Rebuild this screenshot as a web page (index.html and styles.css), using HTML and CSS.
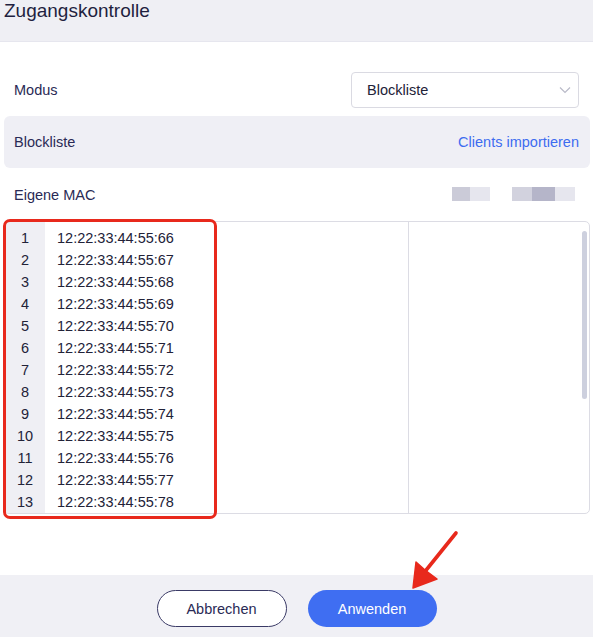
FILE: index.html
```html
<!DOCTYPE html>
<html lang="de">
<head>
<meta charset="utf-8">
<title>Zugangskontrolle</title>
<link rel="stylesheet" href="styles.css">
</head>
<body>
<div class="dialog">
  <header class="head">
    <h1 class="title">Zugangskontrolle</h1>
  </header>

  <main class="content">
    <div class="row mode-row">
      <span class="label">Modus</span>
      <div class="select">
        <span class="select-value">Blockliste</span>
        <svg class="chevron" width="12" height="8" viewBox="0 0 12 8"><path d="M1 1.5 L6 6.5 L11 1.5" fill="none" stroke="#b9bac8" stroke-width="1.2"/></svg>
      </div>
    </div>

    <div class="row list-row">
      <span class="label">Blockliste</span>
      <a class="link">Clients importieren</a>
    </div>

    <div class="row mac-row">
      <span class="label">Eigene MAC</span>
      <div class="masked">
        <span class="px px-a"></span><span class="px px-b"></span>
        <span class="px px-gap"></span>
        <span class="px px-c"></span><span class="px px-d"></span><span class="px px-b wide"></span>
      </div>
    </div>

    <div class="editor">
      <div class="code">
        <ol class="gutter">
          <li>1</li><li>2</li><li>3</li><li>4</li><li>5</li><li>6</li><li>7</li>
          <li>8</li><li>9</li><li>10</li><li>11</li><li>12</li><li>13</li>
        </ol>
        <div class="lines">
          <div>12:22:33:44:55:66</div>
          <div>12:22:33:44:55:67</div>
          <div>12:22:33:44:55:68</div>
          <div>12:22:33:44:55:69</div>
          <div>12:22:33:44:55:70</div>
          <div>12:22:33:44:55:71</div>
          <div>12:22:33:44:55:72</div>
          <div>12:22:33:44:55:73</div>
          <div>12:22:33:44:55:74</div>
          <div>12:22:33:44:55:75</div>
          <div>12:22:33:44:55:76</div>
          <div>12:22:33:44:55:77</div>
          <div>12:22:33:44:55:78</div>
        </div>
      </div>
      <div class="side">
        <div class="thumb"></div>
      </div>
    </div>
  </main>

  <footer class="foot">
    <button class="btn ghost">Abbrechen</button>
    <button class="btn primary">Anwenden</button>
  </footer>

  <!-- highlight frame and pointer drawn on top -->
  <div class="hl-box"></div>
  <svg class="hl-arrow" width="593" height="637" viewBox="0 0 593 637">
    <line x1="456" y1="533" x2="423" y2="574" stroke="#e8291c" stroke-width="3.6" stroke-linecap="round"/>
    <polygon points="413,588 416,562 425,570 437,579" fill="#e8291c" stroke="#e8291c" stroke-width="1.5" stroke-linejoin="round"/>
  </svg>
</div>
</body>
</html>
```

FILE: styles.css
```css
* { box-sizing: border-box; }

html, body {
  margin: 0;
  padding: 0;
  background: #ffffff;
}

body {
  font-family: "Liberation Sans", Arial, sans-serif;
  color: #2a2a4c;
}

.dialog {
  position: relative;
  width: 593px;
  height: 637px;
  display: flex;
  flex-direction: column;
  overflow: hidden;
}

/* title bar */
.head {
  height: 42px;
  background: #efeff4;
  border-bottom: 1px solid #e6e6ee;
  padding: 0 0 0 4px;
}

.title {
  margin: 0;
  font-size: 19px;
  font-weight: 400;
  line-height: 22px;
  color: #1f1f3f;
}

/* form body */
.content {
  flex: 1;
  padding: 30px 14px 0 14px;
}

.row {
  display: flex;
  align-items: center;
  justify-content: space-between;
}

.label {
  font-size: 14.5px;
  color: #2a2a55;
}

.mode-row {
  height: 36px;
}

.select {
  width: 228px;
  height: 36px;
  border: 1px solid #dadae2;
  border-radius: 4px;
  display: flex;
  align-items: center;
  justify-content: space-between;
  padding: 0 7px 0 15px;
  font-size: 14.5px;
  color: #222238;
}

.list-row {
  margin: 8px -11px 0 -10px;
  height: 52px;
  background: #efeff5;
  border-radius: 6px;
  padding: 0 11px 0 10px;
}

.link {
  font-size: 14.5px;
  color: #3d6cf0;
}

.mac-row {
  height: 53px;
}

.masked {
  display: flex;
  height: 14px;
  margin-right: 4px;
  margin-top: -2px;
}

.px { display: block; height: 14px; }
.px-a { width: 18px; background: #cbcbd8; }
.px-b { width: 20px; background: #e6e6ee; }
.px-b.wide { width: 20px; }
.px-gap { width: 22px; }
.px-c { width: 20px; background: #d2d2de; }
.px-d { width: 23px; background: #b5b5c9; }

/* MAC list editor */
.editor {
  margin: 0 -11px 0 -10px;
  height: 293px;
  border: 1px solid #dcdce4;
  border-radius: 5px;
  display: flex;
}

.code {
  width: 404px;
  border-right: 1px solid #dcdce4;
  display: flex;
}

.gutter {
  list-style: none;
  margin: 0;
  width: 40px;
  padding: 5px 0 0 0;
  text-align: center;
  background: #efeff4;
  font-size: 14.5px;
  line-height: 22px;
  color: #222238;
}

.lines {
  padding: 5px 0 0 12px;
  font-size: 14.5px;
  line-height: 22px;
  color: #222238;
}

.side {
  flex: 1;
  display: flex;
  justify-content: flex-end;
  padding: 9px 2px 0 0;
}

.thumb {
  width: 5px;
  height: 168px;
  border-radius: 3px;
  background: #cdd0de;
}

/* footer with actions */
.foot {
  height: 62px;
  background: #f0f0f5;
  display: flex;
  justify-content: center;
  align-items: flex-start;
  gap: 21px;
  padding-top: 15px;
}

.btn {
  width: 130px;
  height: 37px;
  border-radius: 19px;
  font-family: "Liberation Sans", Arial, sans-serif;
  font-size: 14.5px;
  padding: 0;
}

.ghost {
  background: #ffffff;
  border: 1.5px solid #3a3a66;
  color: #2a2a55;
}

.primary {
  width: 129px;
  background: #3f6ef2;
  border: none;
  color: #ffffff;
}

/* red highlight overlay */
.hl-box {
  position: absolute;
  left: 3px;
  top: 219px;
  width: 214px;
  height: 300px;
  border: 3px solid #e8291c;
  border-radius: 7px;
  pointer-events: none;
}

.hl-arrow {
  position: absolute;
  left: 0;
  top: 0;
  pointer-events: none;
}
```
